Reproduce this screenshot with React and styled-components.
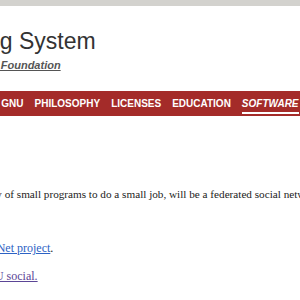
import styled, { createGlobalStyle } from "styled-components";

const Global = createGlobalStyle`
    html, body {
        margin: 0;
        padding: 0;
        background: #fff;
        overflow: hidden;
    }
    body {
        width: 300px;
        height: 300px;
    }
`;

const menu = [
    { name: "ABOUT GNU" },
    { name: "PHILOSOPHY" },
    { name: "LICENSES" },
    { name: "EDUCATION" },
    { name: "SOFTWARE", ativo: true },
    { name: "DOCUMENTATION" },
];

function App() {
    return (
        <Pagina>
            <Global />
            <BarraTopo />
            <Cabecalho>
                <Titulo>GNU Operating System</Titulo>
                <Subtitulo>
                    Sponsored by the <a href="#fsf">Free Software Foundation</a>
                </Subtitulo>
            </Cabecalho>
            <Navegacao>
                <ListaMenu>
                    {menu.map((item) => (
                        <ItemMenu key={item.name} ativo={item.ativo}>
                            {item.name}
                        </ItemMenu>
                    ))}
                </ListaMenu>
            </Navegacao>
            <Conteudo>
                <Paragrafo recuo={119}>
                    The GNU system, a family of small programs to do a small job, will be a federated social network.
                </Paragrafo>
                <Paragrafo recuo={117} espaco={40}>
                    It is based on the <Link href="#statusnet">StatusNet project</Link>.
                </Paragrafo>
                <Paragrafo recuo={48} espaco={14}>
                    Visit <Link visitado href="#social">GNU social.</Link>
                </Paragrafo>
            </Conteudo>
        </Pagina>
    );
}

const Pagina = styled.div`
    width: 300px;
    height: 300px;
    overflow: hidden;
    display: flex;
    flex-direction: column;
`;

const BarraTopo = styled.div`
    height: 6px;
    background-color: #d3d2ce;
`;

const Cabecalho = styled.header`
    display: flex;
    flex-direction: column;
    padding-top: 22px;
    font-family: "Liberation Sans", Arial, sans-serif;
`;

const Titulo = styled.h1`
    margin: 0 0 0 -146px;
    font-size: 23px;
    font-weight: 400;
    line-height: 26px;
    color: #333;
    white-space: nowrap;
`;

const Subtitulo = styled.p`
    margin: 4px 0 0 -171px;
    font-size: 11px;
    line-height: 14px;
    font-weight: 700;
    font-style: italic;
    color: #555;
    white-space: nowrap;

    a {
        color: #555;
        text-decoration: underline;
    }
`;

const Navegacao = styled.nav`
    margin-top: 19px;
    height: 25px;
    background-color: #a42b29;
    display: flex;
    align-items: center;
`;

const ListaMenu = styled.ul`
    list-style: none;
    margin: 0 0 0 -37px;
    padding: 0;
    display: flex;
    gap: 11px;
    white-space: nowrap;
`;

const ItemMenu = styled.li`
    font-family: "Liberation Sans", Arial, sans-serif;
    font-size: 10px;
    font-weight: 700;
    line-height: 14px;
    color: #fff;
    font-style: ${(props) => (props.ativo ? "italic" : "normal")};
    border-bottom: 2px solid ${(props) => (props.ativo ? "#fff" : "transparent")};
    padding-bottom: 1px;
    margin-top: 3px;
`;

const Conteudo = styled.main`
    display: flex;
    flex-direction: column;
    padding-top: 71px;
    font-family: "Liberation Serif", "Times New Roman", serif;
    line-height: 14px;
    color: #222;
`;

const Paragrafo = styled.p`
    margin: ${(props) => props.espaco || 0}px 0 0 ${(props) => -props.recuo}px;
    white-space: nowrap;
    font-size: ${(props) => (props.espaco ? "12px" : "11.2px")};
`;

const Link = styled.a`
    color: ${(props) => (props.visitado ? "#5b4596" : "#2c62c4")};
    text-decoration: underline;
`;

export default App;
